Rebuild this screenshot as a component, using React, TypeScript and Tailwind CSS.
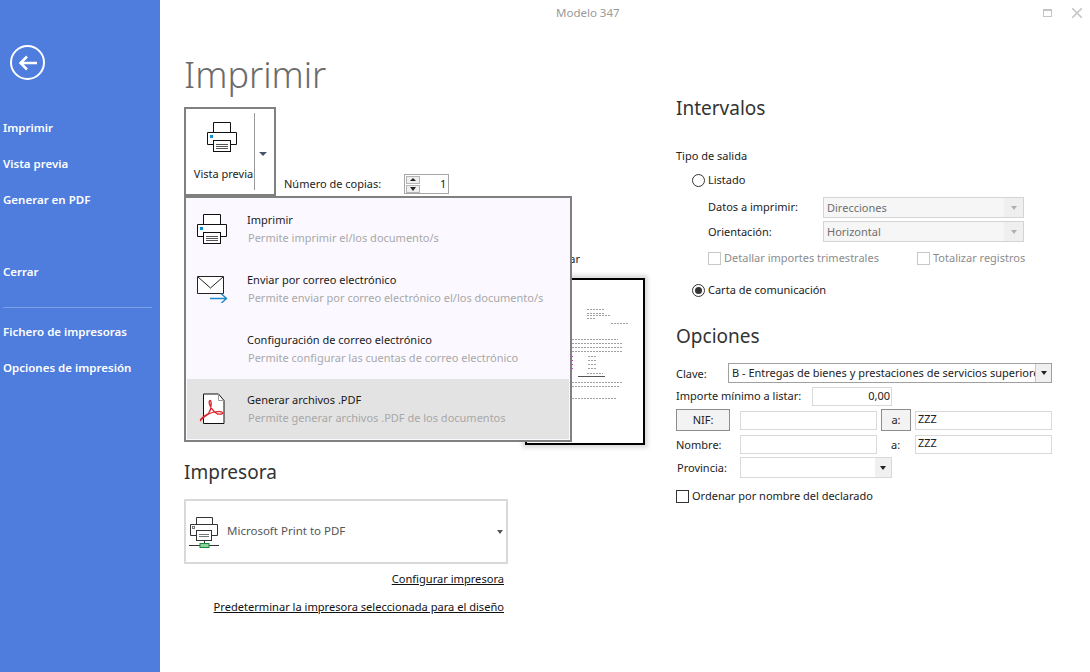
const FONT = "font-['Noto_Sans',_'Open_Sans',_sans-serif]";

function PrinterIcon({ className }: { className?: string }) {
  return (
    <svg className={className} width="32" height="32" viewBox="0 0 32 32" fill="none" stroke="#111" strokeWidth="1">
      <path d="M7.500 11.500V1.500h17v10" fill="#fff" />
      <path d="M7.500 23.500h-6v-12h29v12h-6" fill="#fff" />
      <rect x="7.500" y="19.500" width="17" height="11" fill="#fff" />
      <path d="M10 23.500h12M10 25.500h12M10 27.500h12" stroke="#555" />
      <rect x="4" y="14" width="3" height="3" fill="#0a8fd6" stroke="none" />
    </svg>
  );
}

function MailIcon() {
  return (
    <svg width="32" height="28" viewBox="0 0 32 28" fill="none">
      <path d="M1.500 1.500h26v17h-26z" fill="#fff" stroke="#222" />
      <path d="M2 2l12.500 11L27 2" stroke="#222" />
      <path d="M14 23.500h16M25 18.500l5.500 5-5.500 5" stroke="#1e88c9" strokeWidth="1.400" />
    </svg>
  );
}

function PdfIcon() {
  return (
    <svg width="26" height="32" viewBox="0 0 26 32" fill="none">
      <path d="M4.500 1h15l5.500 6.500V30.500h-20.500z" fill="#fff" stroke="#111" />
      <path d="M19.500 1v6.500h5.500" stroke="#999" />
      <path
        d="M1.500 27.500c-1-2 5-5 8-7 2-3 3-8 2.500-11.500-.5-3-2.500-1-1.500 2 1 4 5 8.500 8 10 3 .5 6 0 5-1.500-1-1.500-8-1-13 1-3 1.500-8 5.500-9 7z"
        stroke="#e0222b"
        strokeWidth="1.300"
      />
    </svg>
  );
}

function NetPrinterIcon() {
  return (
    <svg width="32" height="32" viewBox="0 0 32 32" fill="none" stroke="#333">
      <path d="M7.500 8.500V1.500h16v7" fill="#fff" />
      <path d="M7.500 19.500h-6v-11h27v11h-6" fill="#fff" />
      <rect x="7.500" y="14.500" width="15" height="10" fill="#fff" />
      <path d="M10 18.500h10M10 20.500h10" stroke="#777" />
      <rect x="3.500" y="10.500" width="2" height="2" stroke="#777" />
      <path d="M0 29.500h30M15.500 25v2" stroke="#333" />
      <rect x="11" y="27.500" width="9" height="4" fill="#8fd19e" stroke="#178a3a" />
    </svg>
  );
}

function Caret({ className = "border-t-[#222]" }: { className?: string }) {
  return <span className={`block w-0 h-0 border-x-[3.500px] border-x-transparent border-t-[4px] ${className}`} />;
}

// thumbnail of the letter in the preview; only the part right of the menu shows
function DocThumb() {
  const lines = [
    [60, 29, 17], [60, 33, 17], [60, 35, 24], [60, 38, 8], [84, 43, 18],
    [30, 59, 61], [30, 63, 66], [30, 67, 66], [30, 71, 66],
    [61, 76, 8], [61, 80, 8], [61, 84, 8], [61, 88, 8], [60, 93, 16],
    [30, 102, 66], [30, 106, 62], [30, 118, 60],
  ];
  return (
    <svg width="116" height="163" viewBox="0 0 116 163" className="block">
      {lines.map(([x, y, w], i) => (
        <line key={i} x1={x} x2={x + w} y1={y + 0.5} y2={y + 0.5} stroke="#a0a0a0" strokeDasharray="2 1" />
      ))}
      {[76, 80, 84, 88].map((y) => (
        <rect key={y} x="45" y={y} width="1" height="1" fill="#c040c0" />
      ))}
      <rect x="51" y="96" width="27" height="1" fill="#555" />
    </svg>
  );
}

function MenuItem({ icon, title, desc, active }: { icon?: React.ReactNode; title: string; desc: string; active?: boolean }) {
  return (
    <div className={`flex h-[60px] items-center ${active ? "bg-[#e3e3e3]" : ""}`}>
      <div className="w-[60px] flex justify-center pr-[10px]">{icon}</div>
      <div>
        <div className="text-[11px] leading-[18px] text-[#1a1a1a]">{title}</div>
        <div className="text-[11px] leading-[18px] text-[#a8a8a8] pl-px">{desc}</div>
      </div>
    </div>
  );
}

function Radio({ checked }: { checked?: boolean }) {
  return (
    <span className="w-[13px] h-[13px] rounded-full border border-[#333] bg-white flex items-center justify-center shrink-0">
      {checked && <span className="w-[7px] h-[7px] rounded-full bg-[#333]" />}
    </span>
  );
}

function Check({ muted }: { muted?: boolean }) {
  return <span className={`block w-[13px] h-[13px] border shrink-0 ${muted ? "border-[#c8c8c8]" : "border-[#333]"} bg-white`} />;
}

function DisabledSelect({ value }: { value: string }) {
  return (
    <div className="w-[201px] h-[21px] border border-[#d4d4d4] bg-[#efefef] flex items-center">
      <span className="flex-1 h-full bg-[#f6f6f6] pl-[3px] text-[11px] leading-[19px] text-[#6f6f6f]">{value}</span>
      <span className="w-[19px] flex justify-center"><Caret className="border-t-[#b0b0b0]" /></span>
    </div>
  );
}

function TextBox({ value, className = "" }: { value?: string; className?: string }) {
  return (
    <div className={`border border-[#d9d9d9] bg-white h-[19px] w-[137px] text-[11px] leading-[14px] px-[2px] text-[#222] ${className}`}>
      {value}
    </div>
  );
}

function GreyButton({ label, className }: { label: string; className: string }) {
  return (
    <div className={`h-[22px] border border-[#8c8c8c] bg-[#f3f3f3] flex items-center justify-center text-[11px] ${className}`}>
      {label}
    </div>
  );
}

function SideItem({ label }: { label: string }) {
  return <div className="h-9 flex items-center pl-[3px] text-[11.500px] font-semibold text-white">{label}</div>;
}

export default function App() {
  return (
    <div className={`${FONT} flex w-[1090px] h-[672px] bg-white overflow-hidden text-[11px] text-[#222]`}>
      <aside className="w-[160px] shrink-0 bg-[#4e7ddd] pt-[45px]">
        <div className="ml-[10px] w-[35px] h-[35px] rounded-full border-2 border-white flex items-center justify-center">
          <svg width="20" height="16" viewBox="0 0 20 16" fill="none" stroke="#fff" strokeWidth="2.500">
            <path d="M19 8H3M9 1.500 2.500 8 9 14.500" />
          </svg>
        </div>
        <div className="mt-[30px]">
          <SideItem label="Imprimir" />
          <SideItem label="Vista previa" />
          <SideItem label="Generar en PDF" />
          <div className="mt-9"><SideItem label="Cerrar" /></div>
          <div className="mt-[17px] mb-[6px] ml-[3px] w-[149px] h-px bg-[#7d9fe6]" />
          <SideItem label="Fichero de impresoras" />
          <SideItem label="Opciones de impresión" />
        </div>
      </aside>

      <main className="flex-1 min-w-0">
        <header className="h-[26px] flex items-center pl-[396px] pr-[8px] text-[11.500px] text-[#999]">
          <span className="flex-1">Modelo 347</span>
          <span className="w-[9px] h-[8px] border border-[#c4c4c4] border-t-2 mr-[20px]" />
          <svg width="10" height="10" viewBox="0 0 10 10" stroke="#c8c8c8" strokeWidth="1.600"><path d="M0 0l10 10M10 0 0 10" /></svg>
        </header>

        <div className="flex pl-[24px]">
          <section className="w-[492px] shrink-0">
            <h1 className="h-[81px] pt-[19px] text-[36px] leading-[60px] font-light text-[#6b6b6b]">Imprimir</h1>

            <div className="flex items-end h-[89px]">
              <div className="w-[92px] h-[89px] border-2 border-[#808080] flex pt-[4px] pb-[4px]">
                <div className="w-[68px] flex flex-col items-center pl-[7px]">
                  <PrinterIcon className="mt-[8px] -ml-[3px]" />
                  <span className="mt-[12px] text-[11px] leading-[18px] whitespace-nowrap">Vista previa</span>
                </div>
                <div className="w-px bg-[#9a9a9a]" />
                <div className="flex-1 flex items-center justify-center pt-[4px] pr-[4px]">
                  <span className="block w-0 h-0 border-x-[4px] border-x-transparent border-t-[4px] border-t-[#44546a]" />
                </div>
              </div>
              <span className="ml-[8px] pb-[3px] text-[11px] leading-[18px]">Número de copias:</span>
              <div className="ml-[23px] mb-[2px] w-[45px] h-[20px] border border-[#a6a6a6] flex items-center text-[#222]">
                <div className="ml-[1px] w-[14px] flex flex-col gap-px">
                  <span className="h-[8px] bg-[#efefef] border border-[#b5b5b5] flex items-center justify-center"><span className="w-0 h-0 border-x-[3px] border-x-transparent border-b-[3px] border-b-[#222]" /></span>
                  <span className="h-[8px] bg-[#efefef] border border-[#b5b5b5] flex items-center justify-center"><Caret /></span>
                </div>
                <span className="flex-1 text-right pr-[2px]">1</span>
              </div>
            </div>

            <div className="relative">
              <div className="ml-[341px] pt-[54px] w-[124px]">
                <div className="pr-[69px] text-right text-[11px] leading-[18px] mb-[10px]">
                  <span className="whitespace-nowrap">Intercalar</span>
                </div>
                <div className="w-[120px] h-[167px] border-2 border-black bg-white shadow-[0_0_4px_3px_#dcdcdc]">
                  <DocThumb />
                </div>
              </div>

              <div className="absolute left-0 top-0 w-[388px] h-[246px] border-2 border-[#808080] bg-[#fbf9ff] p-px">
                <MenuItem icon={<PrinterIcon />} title="Imprimir" desc="Permite imprimir el/los documento/s" />
                <MenuItem icon={<MailIcon />} title="Enviar por correo electrónico" desc="Permite enviar por correo electrónico el/los documento/s" />
                <MenuItem title="Configuración de correo electrónico" desc="Permite configurar las cuentas de correo electrónico" />
                <MenuItem icon={<PdfIcon />} title="Generar archivos .PDF" desc="Permite generar archivos .PDF de los documentos" active />
              </div>
            </div>

            <h2 className="mt-[12px] h-[30px] text-[19px] leading-[30px] text-[#333]">Impresora</h2>
            <div className="mt-[12px] w-[324px] h-[65px] border-2 border-[#d9d9d9] flex items-center pl-[3px] pr-[3px]">
              <NetPrinterIcon />
              <span className="ml-[6px] flex-1 pb-[2px] text-[11.500px] text-[#555]">Microsoft Print to PDF</span>
              <Caret className="border-t-[#555]" />
            </div>
            <div className="w-[320px] text-right text-[11.100px] leading-[18px] text-[#111]">
              <div className="mt-[6px] underline">Configurar impresora</div>
              <div className="mt-[10px] underline">Predeterminar la impresora seleccionada para el diseño</div>
            </div>
          </section>

          <section className="w-[376px] shrink-0">
            <h2 className="mt-[67px] h-[30px] text-[19px] leading-[30px] text-[#333]">Intervalos</h2>
            <div className="mt-[24px] h-[18px] leading-[18px]">Tipo de salida</div>

            <div className="mt-[6px] pl-[16px] h-[18px] flex items-center gap-[3px]">
              <Radio />
              <span>Listado</span>
            </div>
            <div className="mt-[8px] pl-[32px] flex items-center">
              <span className="w-[115px]">Datos a imprimir:</span>
              <DisabledSelect value="Direcciones" />
            </div>
            <div className="mt-[3px] pl-[32px] flex items-center">
              <span className="w-[115px] pt-px">Orientación:</span>
              <DisabledSelect value="Horizontal" />
            </div>
            <div className="mt-[7px] pl-[32px] h-[18px] flex items-center text-[#8c8c8c]">
              <div className="w-[209px] flex items-center gap-[3px]">
                <Check muted />
                <span>Detallar importes trimestrales</span>
              </div>
              <div className="flex items-center gap-[3px]">
                <Check muted />
                <span className="whitespace-nowrap">Totalizar registros</span>
              </div>
            </div>
            <div className="mt-[14px] pl-[16px] h-[18px] flex items-center gap-[3px]">
              <Radio checked />
              <span>Carta de comunicación</span>
            </div>

            <h2 className="mt-[22px] h-[30px] text-[19px] leading-[30px] text-[#333]">Opciones</h2>

            <div className="mt-[12px] flex items-center">
              <span className="w-[52px] pt-[2px]">Clave:</span>
              <div className="w-[324px] h-[20px] border border-[#a0a0a0] flex items-center">
                <span className="flex-1 min-w-0 pl-[3px] pr-[4px] pt-px overflow-hidden whitespace-nowrap text-[11px]">
                  B - Entregas de bienes y prestaciones de servicios superiores a 3.005,06
                </span>
                <span className="w-[16px] h-full shrink-0 bg-[#f0f0f0] border-l border-[#c8c8c8] flex items-center justify-center"><Caret /></span>
              </div>
            </div>
            <div className="mt-[4px] flex items-center">
              <span className="w-[136px]">Importe mínimo a listar:</span>
              <div className="w-[80px] h-[19px] border border-[#d9d9d9] text-right pr-px text-[11px] leading-[15px]">0,00</div>
            </div>
            <div className="mt-[3px] flex items-center">
              <GreyButton label="NIF:" className="w-[54px]" />
              <TextBox className="ml-[10px]" />
              <GreyButton label="a:" className="ml-[4px] w-[30px]" />
              <TextBox className="ml-[4px]" value="ZZZ" />
            </div>
            <div className="mt-[4px] flex items-center">
              <span className="w-[64px] pt-[2px]">Nombre:</span>
              <TextBox />
              <span className="w-[38px] pl-[14px] pt-[2px]">a:</span>
              <TextBox value="ZZZ" />
            </div>
            <div className="mt-[3px] flex items-center">
              <span className="w-[64px] pl-px pt-[2px]">Provincia:</span>
              <div className="w-[152px] h-[21px] border border-[#d9d9d9] flex justify-end">
                <span className="w-[16px] h-full bg-[#f0f0f0] flex items-center justify-center"><Caret /></span>
              </div>
            </div>
            <div className="mt-[9px] h-[18px] flex items-center gap-[3px]">
              <Check />
              <span>Ordenar por nombre del declarado</span>
            </div>
          </section>
        </div>
      </main>
    </div>
  );
}
